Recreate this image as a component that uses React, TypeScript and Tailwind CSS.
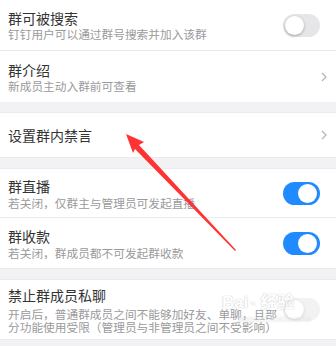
import React from "react";

const font = { fontFamily: '"Noto Sans CJK SC", "Noto Sans", sans-serif' };

function Toggle({ on, faded }: { on: boolean; faded?: boolean }) {
  return (
    <div
      className={`relative w-[37px] h-[23px] rounded-full shrink-0 ${
        on ? "bg-[#1f8bff]" : "bg-[#e6e6e8]"
      } ${faded ? "opacity-50" : ""}`}
    >
      <div
        className={`absolute top-[2px] w-[19px] h-[19px] rounded-full bg-white ${
          on ? "right-[3px]" : "left-[2px] shadow-[0_1px_3px_rgba(0,0,0,0.3)]"
        }`}
      />
    </div>
  );
}

function Chevron() {
  return (
    <svg width="6" height="10" viewBox="0 0 6 10" className="shrink-0">
      <polyline points="1,1 5,5 1,9" fill="none" stroke="#b3b3b6" strokeWidth="1.2" />
    </svg>
  );
}

export default function App() {
  return (
    <div className="relative w-[336px] h-[346px] overflow-hidden bg-[#f2f2f4]" style={font}>
      {/* Section A */}
      <div className="bg-white">
        <div className="h-[51px] flex items-center pl-[8px] pr-[16px] border-b border-[#ebebed]">
          <div className="flex-1 flex flex-col">
            <div className="text-[14px] leading-[18px] text-[#333]">群可被搜索</div>
            <div className="text-[11.7px] leading-[14px] text-[#9a9a9c]">钉钉用户可以通过群号搜索并加入该群</div>
          </div>
          <Toggle on={false} />
        </div>
        <div className="h-[51px] flex items-center pl-[8px] pr-[9px]">
          <div className="flex-1 flex flex-col">
            <div className="text-[14px] leading-[18px] text-[#333]">群介绍</div>
            <div className="text-[11.7px] leading-[14px] text-[#9a9a9c]">新成员主动入群前可查看</div>
          </div>
          <Chevron />
        </div>
      </div>
      <div className="h-[11px] border-b border-[#ebebed]" />
      {/* Section B */}
      <div className="bg-white h-[45px] flex items-center pl-[8px] pr-[9px] border-b border-[#ebebed]">
        <div className="flex-1 text-[14px] leading-[18px] text-[#333]">设置群内禁言</div>
        <Chevron />
      </div>
      <div className="h-[11px] border-b border-[#ebebed]" />
      {/* Section C */}
      <div className="bg-white">
        <div className="h-[49px] flex items-center pl-[8px] pr-[16px] border-b border-[#ebebed]">
          <div className="flex-1 flex flex-col">
            <div className="text-[14px] leading-[18px] text-[#333]">群直播</div>
            <div className="text-[11.7px] leading-[15px] text-[#9a9a9c]">若关闭，仅群主与管理员可发起直播</div>
          </div>
          <Toggle on />
        </div>
        <div className="h-[51px] flex items-center pl-[8px] pr-[16px] border-b border-[#ebebed]">
          <div className="flex-1 flex flex-col">
            <div className="text-[14px] leading-[18px] text-[#333]">群收款</div>
            <div className="text-[11.7px] leading-[15px] text-[#9a9a9c]">若关闭，群成员都不可发起群收款</div>
          </div>
          <Toggle on />
        </div>
      </div>
      <div className="h-[11px] border-b border-[#ebebed]" />
      {/* Section D */}
      <div className="bg-white h-[60px] flex items-center pl-[8px] pr-[16px] border-b border-[#ebebed]">
        <div className="w-[270px] flex flex-col">
          <div className="text-[14px] leading-[18px] text-[#333]">禁止群成员私聊</div>
          <div className="mt-[3px] text-[11.7px] leading-[13px] text-[#9a9a9c]">
            开启后，普通群成员之间不能够加好友、单聊，且部分功能使用受限（管理员与非管理员之间不受影响）
          </div>
        </div>
        <div className="flex-1" />
        <Toggle on={false} faded />
      </div>

      {/* watermark */}
      <div className="absolute left-[222px] top-[293px] flex flex-col items-start pointer-events-none opacity-60">
        <div className="text-[17px] leading-[20px] font-bold text-white [text-shadow:0_0_1px_#aaa,0_0_1px_#aaa]" style={{ fontFamily: '"Liberation Sans", "Noto Sans CJK SC", sans-serif' }}>
          Bai<span className="text-[12px]">◔</span> 经验
        </div>
        <div className="ml-[16px] text-[9px] leading-[10px] text-white [text-shadow:0_0_1px_#aaa]" style={{ fontFamily: '"Liberation Sans", sans-serif' }}>
          jingyan.baidu.com
        </div>
      </div>

      {/* red arrow */}
      <svg className="absolute left-0 top-0 pointer-events-none" width="336" height="346" viewBox="0 0 336 346">
        <polygon points="126,134 144,142 139,145 236,250 235,251 135,149 133,153" fill="#ff3333" />
      </svg>
    </div>
  );
}
